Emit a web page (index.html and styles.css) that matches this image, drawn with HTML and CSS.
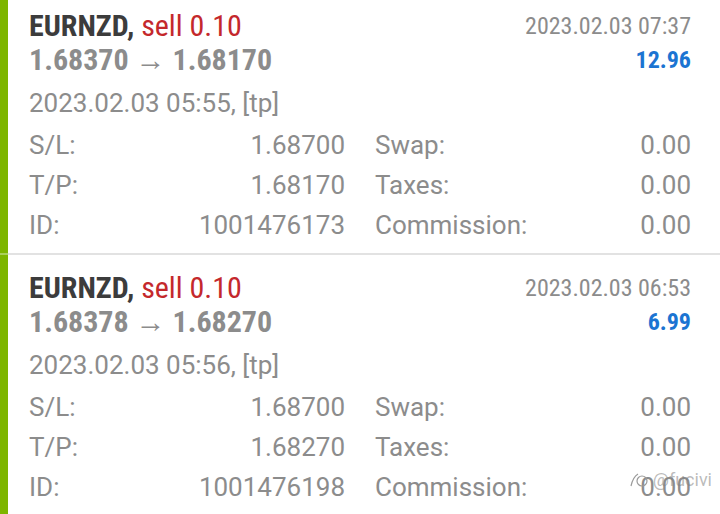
FILE: index.html
```html
<!DOCTYPE html>
<html>
<head>
<meta charset="utf-8">
<link rel="stylesheet" href="styles.css">
</head>
<body>
<div class="list">
  <div class="item">
    <div class="head">
      <div class="title"><span class="sym">EURNZD,</span> <span class="side">sell 0.10</span></div>
      <div class="close-time">2023.02.03 07:37</div>
    </div>
    <div class="head prices">
      <div class="price">1.68370 → 1.68170</div>
      <div class="profit">12.96</div>
    </div>
    <div class="open-time">2023.02.03 05:55, [tp]</div>
    <div class="grid">
      <div class="cell"><span>S/L:</span><span>1.68700</span></div>
      <div class="cell"><span>Swap:</span><span>0.00</span></div>
      <div class="cell"><span>T/P:</span><span>1.68170</span></div>
      <div class="cell"><span>Taxes:</span><span>0.00</span></div>
      <div class="cell"><span>ID:</span><span>1001476173</span></div>
      <div class="cell"><span>Commission:</span><span>0.00</span></div>
    </div>
  </div>
  <div class="divider"></div>
  <div class="item">
    <div class="head">
      <div class="title"><span class="sym">EURNZD,</span> <span class="side">sell 0.10</span></div>
      <div class="close-time">2023.02.03 06:53</div>
    </div>
    <div class="head prices">
      <div class="price">1.68378 → 1.68270</div>
      <div class="profit">6.99</div>
    </div>
    <div class="open-time">2023.02.03 05:56, [tp]</div>
    <div class="grid">
      <div class="cell"><span>S/L:</span><span>1.68700</span></div>
      <div class="cell"><span>Swap:</span><span>0.00</span></div>
      <div class="cell"><span>T/P:</span><span>1.68270</span></div>
      <div class="cell"><span>Taxes:</span><span>0.00</span></div>
      <div class="cell"><span>ID:</span><span>1001476198</span></div>
      <div class="cell"><span>Commission:</span><span>0.00</span></div>
    </div>
  </div>
  <div class="divider"></div>
</div>
<div class="watermark"><svg width="22" height="18" viewBox="0 0 22 18"><path d="M2 15 Q4 6 9 3" fill="none" stroke="#9a9a9a" stroke-width="1.2"/><circle cx="13" cy="10" r="5" fill="none" stroke="#9a9a9a" stroke-width="1.2"/></svg><span>@fucivi</span></div>
</body>
</html>
```
FILE: styles.css
```css
html, body {
  margin: 0;
  padding: 0;
  background: #ffffff;
  overflow: hidden;
}
body {
  width: 720px;
  height: 514px;
  position: relative;
  font-family: Roboto, "Noto Sans", sans-serif;
  color: #8c8c8c;
}
.list {
  margin-top: -7px;
}
.item {
  border-left: 8px solid #7db500;
  padding: 14px 29px 8px 21px;
  height: 238px;
}
.divider {
  height: 2px;
  background: linear-gradient(to right, #a9cf5c 0 8px, #e2e2e2 8px);
}
.head {
  display: flex;
  justify-content: space-between;
  align-items: center;
  height: 34px;
}
.head.prices {
  height: 36px;
}
.title {
  font-family: "Roboto Condensed", Roboto, sans-serif;
  font-size: 30px;
  line-height: 34px;
  white-space: nowrap;
  margin-top: 4px;
}
.sym {
  font-weight: 700;
  color: #3c3c3c;
}
.side {
  color: #c4282c;
}
.close-time {
  font-family: "Roboto Condensed", Roboto, sans-serif;
  font-size: 24px;
  margin-top: 4px;
  color: #8c8c8c;
}
.price {
  font-family: "Roboto Condensed", Roboto, sans-serif;
  font-weight: 700;
  font-size: 30px;
  color: #8c8c8c;
}
.profit {
  font-family: "Roboto Condensed", Roboto, sans-serif;
  font-weight: 700;
  font-size: 24px;
  margin-top: 2px;
  color: #1b74d2;
}
.open-time {
  margin-top: 6px;
  font-size: 26px;
  line-height: 40px;
  color: #8c8c8c;
}
.grid {
  margin-top: 2px;
  display: grid;
  grid-template-columns: 1fr 1fr;
  column-gap: 30px;
}
.cell {
  display: flex;
  justify-content: space-between;
  font-size: 26px;
  line-height: 40px;
  color: #8c8c8c;
}
.watermark {
  position: absolute;
  right: 8px;
  bottom: 24px;
  display: flex;
  align-items: center;
  gap: 2px;
  font-size: 18px;
  color: rgba(130, 130, 130, 0.55);
}
```
